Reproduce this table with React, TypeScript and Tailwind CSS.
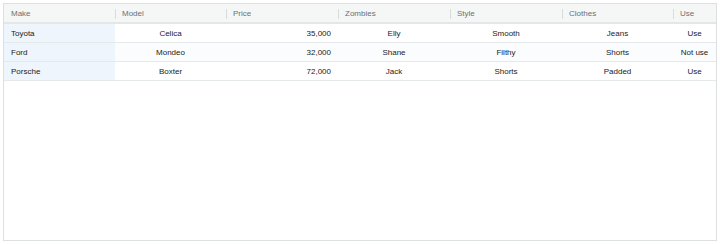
import React from "react";

const cols = [
  { key: "make", label: "Make", w: "w-[111px]", align: "justify-start pl-[7px]" },
  { key: "model", label: "Model", w: "w-[111px]", align: "justify-center" },
  { key: "price", label: "Price", w: "w-[112px]", align: "justify-end pr-[7px]" },
  { key: "zombies", label: "Zombies", w: "w-[112px]", align: "justify-center" },
  { key: "style", label: "Style", w: "w-[112px]", align: "justify-center" },
  { key: "clothes", label: "Clothes", w: "w-[111px]", align: "justify-center" },
  { key: "use", label: "Use", w: "flex-1", align: "justify-center" },
];

const rows = [
  { make: "Toyota", model: "Celica", price: "35,000", zombies: "Elly", style: "Smooth", clothes: "Jeans", use: "Use" },
  { make: "Ford", model: "Mondeo", price: "32,000", zombies: "Shane", style: "Filthy", clothes: "Shorts", use: "Not use" },
  { make: "Porsche", model: "Boxter", price: "72,000", zombies: "Jack", style: "Shorts", clothes: "Padded", use: "Use" },
];

export default function App() {
  return (
    <div className="h-[244px] w-[720px] bg-white p-[3px] font-['Liberation_Sans',Arial,sans-serif] text-[8px]">
      <div className="h-[238px] w-[714px] overflow-hidden border border-[#dde0e0] bg-white">
        <div className="flex h-[20px] border-b-2 border-[#e4e7e7] bg-[#f5f7f7] text-[#6b6f70]">
          {cols.map((c, i) => (
            <div key={c.key} className={`relative flex items-center pl-[7px] pt-[2px] ${c.w}`}>
              {i > 0 && <span className="absolute left-0 top-[5px] h-[10px] w-px bg-[#d9dcdc]" />}
              {c.label}
            </div>
          ))}
        </div>
        {rows.map((r, ri) => (
          <div
            key={ri}
            className={`flex h-[19px] border-b border-[#e6e9e9] text-[#222] ${ri === 1 ? "bg-[#fbfcfe]" : "bg-white"}`}
          >
            {cols.map((c) => (
              <div
                key={c.key}
                className={`flex items-center pt-px ${c.w} ${c.align} ${c.key === "make" ? "bg-[#eef5fd]" : ""}`}
              >
                {(r as Record<string, string>)[c.key]}
              </div>
            ))}
          </div>
        ))}
      </div>
    </div>
  );
}
